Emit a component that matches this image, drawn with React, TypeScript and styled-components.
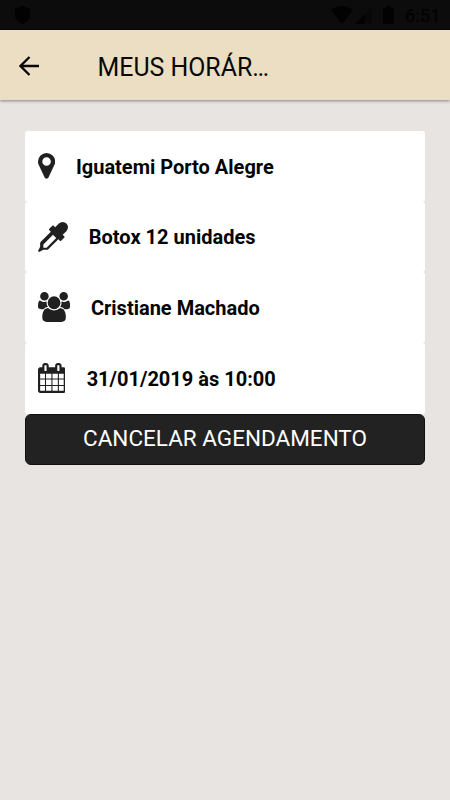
import React from "react";
import styled, { createGlobalStyle } from "styled-components";

const GlobalStyle = createGlobalStyle`
  *, *::before, *::after { box-sizing: border-box; }
  body { margin: 0; background: #e8e4e1; font-family: Roboto, "Open Sans", sans-serif; }
`;

const Screen = styled.div`
  display: flex;
  flex-direction: column;
  width: 100%;
  max-width: 450px;
  height: 800px;
  overflow: hidden;
  background: #e8e4e1;
`;

const StatusBar = styled.div`
  display: flex;
  align-items: center;
  flex: none;
  height: 30px;
  background: #0c0c0c;
  border-bottom: 1px solid #060504;
  color: #020202;
  svg { display: block; flex: none; }
`;

const StatusIcons = styled.div`
  display: flex;
  align-items: center;
  margin-left: auto;
  margin-right: 10px;
  padding-top: 1px;
`;

const Clock = styled.span`
  margin-left: 7px;
  width: 35px;
  padding-top: 2px;
  font-size: 18px;
  line-height: 20px;
  font-weight: 500;
  white-space: nowrap;
`;

const Header = styled.header`
  display: flex;
  align-items: center;
  flex: none;
  height: 70px;
  padding: 2px 0 0 19px;
  background: #ecdec2;
  box-shadow: 0 1px 3px rgba(40, 40, 60, 0.5);
`;

const BackButton = styled.button`
  display: flex;
  padding: 0;
  border: 0;
  background: none;
  color: #080808;
`;

const Title = styled.h1`
  width: 176px;
  margin: 0 0 0 57.5px;
  padding-top: 4px;
  font-size: 24.9px;
  line-height: 32px;
  font-weight: 400;
  color: #080808;
  white-space: nowrap;
`;

const Content = styled.main`
  display: flex;
  flex-direction: column;
  padding: 31px 25px 0;
`;

const Card = styled.div`
  display: flex;
  align-items: center;
  gap: 21.2px;
  height: 70.7px;
  padding-left: 12.6px;
  border-radius: 3px;
  background: #fff;
  svg { display: block; flex: none; margin-bottom: 1px; }
`;

const CardText = styled.span`
  padding-top: 0.8px;
  font-size: 20px;
  line-height: 28px;
  font-weight: 700;
  color: #040404;
  white-space: nowrap;
`;

const CancelButton = styled.button`
  height: 51px;
  padding: 0 0 3px;
  border: 1px solid #101010;
  border-radius: 6px;
  background: #222;
  color: #fff;
  font-family: inherit;
  font-size: 22.5px;
  line-height: 28px;
  font-weight: 400;
`;

type Glyph = { box: string; width: number; height: number; path: string };

// Glyphs are drawn on a 1792-unit grid, shown at 30px.
const glyphs: Record<string, Glyph> = {
  marker: {
    box: "384 128 1024 1536",
    width: 17.14,
    height: 25.7,
    path: "M1152 640q0-106-75-181t-181-75-181 75-75 181 75 181 181 75 181-75 75-181zm256 0q0 109-33 179l-364 774q-16 33-47.5 52t-67.5 19-67.5-19-46.5-52l-365-774q-33-70-33-179 0-212 150-362t362-150 362 150 150 362z",
  },
  dropper: {
    box: "0 0 1792 1792",
    width: 30,
    height: 30,
    path: "M1698 94q94 94 94 226.5t-94 225.5l-225 223 104 104q10 10 10 23t-10 23l-210 210q-10 10-23 10t-23-10l-105-105-603 603q-37 37-90 37h-203l-256 128-64-64 128-256v-203q0-53 37-90l603-603-105-105q-10-10-10-23t10-23l210-210q10-10 23-10t23 10l104 104 223-225q93-94 225.5-94t226.5 94zm-1186 1442l576-576-192-192-576 576v192h192z",
  },
  group: {
    box: "-64 0 1920 1792",
    width: 32.14,
    height: 30,
    path: "M529 896q-162 5-265 128h-134q-82 0-138-40.5t-56-118.5q0-353 124-353 6 0 43.5 21t97.5 42.5 119 21.5q67 0 133-23-5 37-5 66 0 139 81 256zm1071 637q0 120-73 189.5t-194 69.5h-874q-121 0-194-69.5t-73-189.5q0-53 3.5-103.5t14-109 26.5-108.5 43-97.5 62-81 85.5-53.5 111.5-20q10 0 43 21.5t73 48 107 48 135 21.5 135-21.5 107-48 73-48 43-21.5q61 0 111.5 20t85.5 53.5 62 81 43 97.5 26.5 108.5 14 109 3.5 103.5zm-1024-1277q0 106-75 181t-181 75-181-75-75-181 75-181 181-75 181 75 75 181zm704 384q0 159-112.5 271.5t-271.5 112.5-271.5-112.5-112.5-271.5 112.5-271.5 271.5-112.5 271.5 112.5 112.5 271.5zm576 225q0 78-56 118.5t-138 40.5h-134q-103-123-265-128 81-117 81-256 0-29-5-66 66 23 133 23 59 0 119-21.5t97.5-42.5 43.5-21q124 0 124 353zm-128-609q0 106-75 181t-181 75-181-75-75-181 75-181 181-75 181 75 75 181z",
  },
  calendar: {
    box: "64 0 1664 1792",
    width: 27.86,
    height: 30,
    path: "M192 1664h288v-288h-288v288zm352 0h320v-288h-320v288zm-352-352h288v-320h-288v320zm352 0h320v-320h-320v320zm-352-384h288v-288h-288v288zm736 736h320v-288h-320v288zm-384-736h320v-288h-320v288zm768 736h288v-288h-288v288zm-384-352h320v-320h-320v320zm-352-864v-288q0-13-9.5-22.5t-22.5-9.5h-64q-13 0-22.5 9.5t-9.5 22.5v288q0 13 9.5 22.5t22.5 9.5h64q13 0 22.5-9.5t9.5-22.5zm736 864h288v-320h-288v320zm-384-384h320v-288h-320v288zm384 0h288v-288h-288v288zm32-480v-288q0-13-9.5-22.5t-22.5-9.5h-64q-13 0-22.5 9.5t-9.5 22.5v288q0 13 9.5 22.5t22.5 9.5h64q13 0 22.5-9.5t9.5-22.5zm384-64v1280q0 52-38 90t-90 38h-1408q-52 0-90-38t-38-90v-1280q0-52 38-90t90-38h128v-96q0-66 47-113t113-47h64q66 0 113 47t47 113v96h384v-96q0-66 47-113t113-47h64q66 0 113 47t47 113v96h128q52 0 90 38t38 90z",
  },
};

const rows = [
  { icon: "marker", text: "Iguatemi Porto Alegre" },
  { icon: "dropper", text: "Botox 12 unidades" },
  { icon: "group", text: "Cristiane Machado" },
  { icon: "calendar", text: "31/01/2019 às 10:00" },
];

function GlyphIcon({ name }: { name: string }) {
  const g = glyphs[name];
  return (
    <svg width={g.width} height={g.height} viewBox={g.box} fill="#202020" aria-hidden="true">
      <path d={g.path} />
    </svg>
  );
}

const Shield = styled.svg`
  margin-left: 15px;
`;

export default function App() {
  return (
    <>
      <GlobalStyle />
      <Screen>
        <StatusBar>
          <Shield width="15" height="18" viewBox="0 0 15 18" fill="currentColor">
            <path d="M7.5 0 15 3v6c0 4-3 7.5-7.5 9C3 16.5 0 13 0 9V3z" />
          </Shield>
          <StatusIcons>
            <svg width="68" height="20" viewBox="0 0 68 20" fill="currentColor">
              <path d="M1 5Q12 -3 23 5L12 19z" />
              <path d="M42 2v17H25z" opacity=".35" />
              <path d="M35 9v10H25z" />
              <path d="M53 3h3V1h5v2h3v16H53z" />
            </svg>
            <Clock>6:51</Clock>
          </StatusIcons>
        </StatusBar>
        <Header>
          <BackButton aria-label="Voltar">
            <svg width="21" height="20" viewBox="0 0 21 20" fill="none" stroke="currentColor" strokeWidth="2.3">
              <path d="M20 10H2M10.5 1 1.5 10l9 9" />
            </svg>
          </BackButton>
          <Title>MEUS HORÁR…</Title>
        </Header>
        <Content>
          {rows.map((r) => (
            <Card key={r.icon}>
              <GlyphIcon name={r.icon} />
              <CardText>{r.text}</CardText>
            </Card>
          ))}
          <CancelButton>CANCELAR AGENDAMENTO</CancelButton>
        </Content>
      </Screen>
    </>
  );
}
